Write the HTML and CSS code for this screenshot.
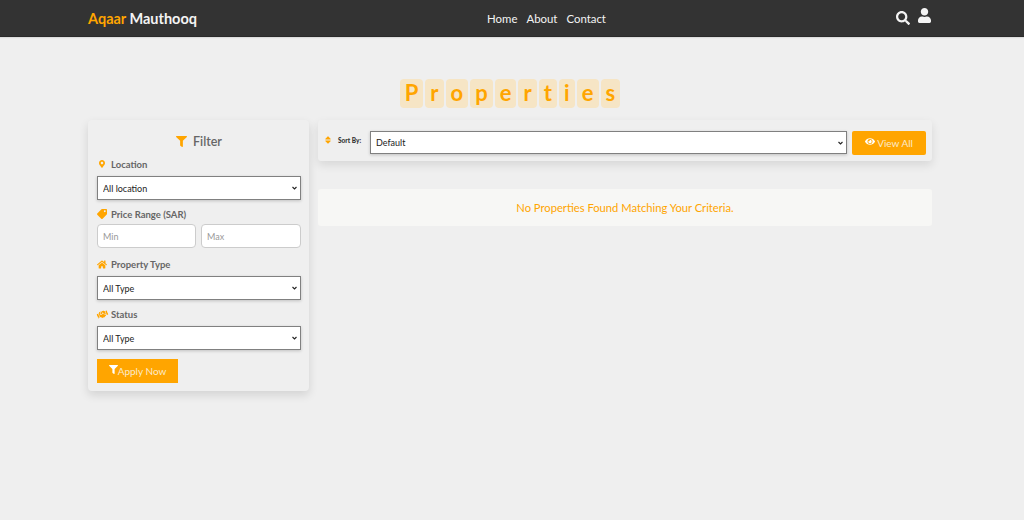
FILE: index.html
```html
<!DOCTYPE html>
<html lang="en">
<head>
<meta charset="utf-8">
<title>Properties</title>
<link rel="stylesheet" href="styles.css">
</head>
<body>
<header class="nav">
  <a class="brand"><span class="accent">Aqaar</span> Mauthooq</a>
  <nav class="links"><a>Home</a><a>About</a><a>Contact</a></nav>
  <div class="nav-icons">
    <svg class="ico-search" viewBox="0 0 512 512"><path d="M505 442.7L405.3 343c-4.5-4.5-10.6-7-17-7H372c27.6-35.3 44-79.7 44-128C416 93.1 322.9 0 208 0S0 93.1 0 208s93.1 208 208 208c48.3 0 92.7-16.4 128-44v16.3c0 6.4 2.5 12.5 7 17l99.7 99.7c9.4 9.4 24.6 9.4 33.9 0l28.3-28.3c9.4-9.4 9.4-24.6.1-34zM208 336c-70.7 0-128-57.2-128-128 0-70.7 57.2-128 128-128 70.7 0 128 57.2 128 128 0 70.7-57.2 128-128 128z"/></svg>
    <svg class="ico-user" viewBox="0 0 448 512"><path d="M224 256c70.7 0 128-57.3 128-128S294.7 0 224 0 96 57.3 96 128s57.3 128 128 128zm89.6 32h-16.7c-22.2 10.2-46.9 16-72.9 16s-50.6-5.8-72.9-16h-16.7C60.2 288 0 348.2 0 422.4V464c0 26.5 21.5 48 48 48h352c26.5 0 48-21.5 48-48v-41.6c0-74.2-60.2-134.4-134.4-134.4z"/></svg>
  </div>
</header>

<h1 class="title"><span>P</span><span>r</span><span>o</span><span>p</span><span>e</span><span>r</span><span>t</span><span>i</span><span>e</span><span>s</span></h1>

<main class="layout">
  <aside class="filter">
    <h2 class="filter-title">
      <svg class="ico-filter-lg" viewBox="0 0 512 512"><path d="M487.976 0H24.028C2.71 0-8.047 25.866 7.058 40.971L192 225.941V432c0 7.831 3.821 15.17 10.237 19.662l80 55.98C298.02 518.69 320 507.493 320 487.98V225.941l184.947-184.97C520.021 25.896 509.338 0 487.976 0z"/></svg>
      Filter
    </h2>
    <label class="field-label"><span class="ico-box"><svg class="ico-s" viewBox="0 0 384 512"><path d="M172.268 501.67C26.97 291.031 0 269.413 0 192 0 85.961 85.961 0 192 0s192 85.961 192 192c0 77.413-26.97 99.031-172.268 309.67-9.535 13.774-29.93 13.773-39.464 0zM192 272c44.183 0 80-35.817 80-80s-35.817-80-80-80-80 35.817-80 80 35.817 80 80 80z"/></svg></span>Location</label>
    <select class="pick"><option>All location</option></select>
    <label class="field-label gap-price"><span class="ico-box"><svg class="ico-tag" viewBox="0 0 512 512"><path d="M0 252.118V48C0 21.49 21.49 0 48 0h204.118a48 48 0 0 1 33.941 14.059l211.882 211.882c18.745 18.745 18.745 49.137 0 67.882L293.823 497.941c-18.745 18.745-49.137 18.745-67.882 0L14.059 286.059A48 48 0 0 1 0 252.118zM112 64c-26.51 0-48 21.49-48 48s21.49 48 48 48 48-21.49 48-48-21.49-48-48-48z"/></svg></span>Price Range (SAR)</label>
    <div class="range">
      <input class="num" placeholder="Min">
      <input class="num" placeholder="Max">
    </div>
    <label class="field-label gap-type"><span class="ico-box"><svg class="ico-home" viewBox="0 0 576 512"><path d="M280.37 148.26L96 300.11V464a16 16 0 0 0 16 16l112.06-.29a16 16 0 0 0 15.92-16V368a16 16 0 0 1 16-16h64a16 16 0 0 1 16 16v95.64a16 16 0 0 0 16 16.05L464 480a16 16 0 0 0 16-16V300L295.67 148.26a12.19 12.19 0 0 0-15.3 0zM571.6 251.47L488 182.56V44.05a12 12 0 0 0-12-12h-56a12 12 0 0 0-12 12v72.61L318.47 43a48 48 0 0 0-61 0L4.34 251.47a12 12 0 0 0-1.6 16.9l25.5 31A12 12 0 0 0 45.15 301l235.22-193.74a12.19 12.19 0 0 1 15.3 0L530.9 301a12 12 0 0 0 16.9-1.6l25.5-31a12 12 0 0 0-1.7-16.93z"/></svg></span>Property Type</label>
    <select class="pick"><option>All Type</option></select>
    <label class="field-label gap-status"><span class="ico-box"><svg class="ico-shake" viewBox="0 0 640 512"><path d="M434.7 64h-85.9c-8 0-15.7 3-21.6 8.4l-98.3 90c-.1.1-.2.3-.3.4-16.6 15.6-16.3 40.5-2.1 56 12.7 13.9 39.4 17.6 56.1 2.7.1-.1.3-.1.4-.2l79.9-73.2c6.5-5.9 16.7-5.5 22.6 1 6 6.5 5.5 16.6-1 22.6l-26.1 23.9L504 313.8c2.9 2.4 5.5 5 7.9 7.7V128l-54.6-54.6c-5.9-6-14.1-9.4-22.6-9.4zM544 128.2v223.9c0 17.7 14.3 32 32 32h64V128.2h-96zm48 223.9c-8.8 0-16-7.2-16-16s7.2-16 16-16 16 7.2 16 16-7.2 16-16 16zM0 384h64c17.7 0 32-14.3 32-32V128.2H0V384zm48-63.9c8.8 0 16 7.2 16 16s-7.2 16-16 16-16-7.2-16-16c0-8.9 7.2-16 16-16zm435.9 18.6L334.6 217.5l-30 27.5c-29.7 27.1-75.2 24.5-101.7-4.4-26.9-29.4-24.8-74.9 4.4-101.7L289.1 64h-83.8c-8.5 0-16.6 3.4-22.6 9.4L128 128v223.9h18.3l90.5 81.9c27.4 22.3 67.7 18.1 90-9.3l.2-.2 17.9 15.5c15.9 13 39.4 10.5 52.3-5.4l31.4-38.6 5.4 4.4c13.7 11.1 33.9 9.1 45-4.7l9.5-11.7c11.2-13.8 9.1-33.9-4.6-45.1z"/></svg></span>Status</label>
    <select class="pick"><option>All Type</option></select>
    <button class="apply"><svg class="ico-apply" viewBox="0 0 512 512"><path d="M487.976 0H24.028C2.71 0-8.047 25.866 7.058 40.971L192 225.941V432c0 7.831 3.821 15.17 10.237 19.662l80 55.98C298.02 518.69 320 507.493 320 487.98V225.941l184.947-184.97C520.021 25.896 509.338 0 487.976 0z"/></svg>Apply Now</button>
  </aside>

  <section class="results">
    <div class="sortbar">
      <svg class="ico-sort" viewBox="0 0 320 512"><path d="M41 288h238c21.4 0 32.1 25.9 17 41L177 448c-9.4 9.4-24.6 9.4-33.9 0L24 329c-15.1-15.1-4.4-41 17-41zm255-105L177 64c-9.4-9.4-24.6-9.4-33.9 0L24 183c-15.1 15.1-4.4 41 17 41h238c21.4 0 32.1-25.9 17-41z"/></svg>
      <span class="sort-label">Sort By:</span>
      <select class="pick sort-pick"><option>Default</option></select>
      <button class="view"><svg class="ico-eye" viewBox="0 0 576 512"><path d="M572.52 241.4C518.29 135.59 410.93 64 288 64S57.68 135.64 3.48 241.41a32.35 32.35 0 0 0 0 29.19C57.71 376.41 165.07 448 288 448s230.32-71.64 284.52-177.41a32.35 32.35 0 0 0 0-29.19zM288 400a144 144 0 1 1 144-144 143.93 143.93 0 0 1-144 144zm0-240a95.31 95.31 0 0 0-25.31 3.79 47.85 47.85 0 0 1-66.9 66.9A95.78 95.78 0 1 0 288 160z"/></svg>View All</button>
    </div>
    <div class="empty">No Properties Found Matching Your Criteria.</div>
  </section>
</main>
</body>
</html>
```
FILE: styles.css
```css
* { box-sizing: border-box; }
html, body { height: 100%; }
body {
  margin: 0;
  background: #efefef;
  color: #333;
  font-family: "Lato", "Noto Sans", "Liberation Sans", sans-serif;
  overflow: hidden;
}
svg { fill: currentColor; display: block; flex: none; }

.nav {
  height: 37px;
  background: #333;
  color: #f4f4f4;
  border-bottom: 1px solid #2a2a2a;
  box-shadow: 0 1px 1px #ddd;
  padding: 0 93px 0 88px;
  display: flex;
  justify-content: space-between;
  align-items: center;
}
.brand { font-size: 14.5px; font-weight: 700; }
.accent { color: #ffa500; }
.links { display: flex; gap: 9px; font-size: 11.4px; }
.nav-icons { display: flex; align-items: center; gap: 8px; }
.ico-search { width: 14px; height: 14px; margin-top: -1px; }
.ico-user { width: 13px; height: 15px; margin-top: -6px; }

.title {
  margin: 42px 0 0;
  padding-right: 4px;
  display: flex;
  justify-content: center;
  gap: 2px;
  height: 29px;
  font-size: 22px;
  font-weight: 700;
  color: #ffa500;
}
.title span {
  background: #f6e5c5;
  border-radius: 4px;
  padding: 0 5px;
  line-height: 28px;
  min-width: 16px;
  text-align: center;
}

.layout {
  margin: 12px 92px 0 88px;
  display: grid;
  grid-template-columns: 221px 1fr;
  gap: 9px;
  align-items: start;
}

.filter {
  height: 271px;
  background: #efefef;
  border-radius: 4px;
  box-shadow: 0 4px 10px rgba(0, 0, 0, .12);
  padding: 12px 8px 0 9px;
  color: #666;
}
.filter-title {
  margin: 0 0 7px;
  display: flex;
  justify-content: center;
  align-items: center;
  gap: 6px;
  font-size: 12.5px;
  font-weight: 600;
  color: #666;
  height: 18px;
}
.ico-filter-lg { width: 11px; height: 11px; color: #ffa500; }
.field-label {
  display: flex;
  align-items: center;
  height: 14px;
  font-size: 9.5px;
  font-weight: 700;
  color: #666;
  margin-bottom: 5px;
}
.ico-box { width: 14px; display: flex; justify-content: flex-start; color: #ffa500; }
.ico-s { width: 6px; height: 8px; margin-left: 2px; }
.ico-tag { width: 10px; height: 10px; transform: scaleX(-1); }
.ico-home { width: 10px; height: 9px; }
.ico-shake { width: 11px; height: 9px; transform: rotate(-20deg); }
.gap-price { margin-top: 7px; margin-bottom: 3px; }
.gap-type { margin-top: 9px; }
.gap-status { margin-top: 7px; margin-bottom: 5px; }

.pick {
  appearance: none;
  width: 100%;
  height: 24px;
  background: #fff url("data:image/svg+xml,%3Csvg xmlns='http://www.w3.org/2000/svg' viewBox='0 0 10 6'%3E%3Cpath d='M1 1l4 4 4-4' fill='none' stroke='%23222' stroke-width='2.2'/%3E%3C/svg%3E") no-repeat right 3px center / 5px 4px;
  border: 1px solid #808080;
  border-radius: 0;
  box-shadow: 0 1px 3px rgba(0, 0, 0, .2);
  font-family: inherit;
  font-size: 9px;
  color: #222;
  padding: 0 5px;
  display: block;
}
.range { display: grid; grid-template-columns: 99px 100px; gap: 5px; }
.num {
  height: 24px;
  width: 100%;
  min-width: 0;
  background: #fff;
  border: 1px solid #ccc;
  border-radius: 4px;
  font-family: inherit;
  font-size: 9px;
  padding: 0 5px;
}
.num::placeholder { color: #999; opacity: 1; }

.apply {
  margin-top: 9px;
  height: 24px;
  width: 81px;
  background: #ffa500;
  color: #fbeacb;
  border: 0;
  border-radius: 0;
  font-family: inherit;
  font-size: 10px;
  padding: 0;
  display: flex;
  align-items: center;
  justify-content: center;
}
.ico-apply { width: 9px; height: 9px; color: #fff; margin-top: -3px; }

.results { display: flex; flex-direction: column; gap: 28px; min-width: 0; }
.sortbar {
  height: 41px;
  background: #efefef;
  border-radius: 3px;
  box-shadow: 0 4px 10px rgba(0, 0, 0, .1);
  padding: 4px 6px 0;
  display: flex;
  align-items: center;
}
.ico-sort { width: 6px; height: 10px; color: #ffa500; margin: -5px 7px 0 1px; }
.sort-label { font-size: 6.5px; font-weight: 900; color: #333; width: 32px; margin-top: -5px; }
.sort-pick { flex: 1; min-width: 0; width: auto; height: 23px; }
.view {
  margin-left: 5px;
  width: 74px;
  height: 24px;
  background: #ffa500;
  color: #fbeacb;
  border: 0;
  border-radius: 2px;
  font-family: inherit;
  font-size: 10px;
  padding: 0;
  display: flex;
  align-items: center;
  justify-content: center;
  gap: 2px;
}
.ico-eye { width: 10px; height: 9px; color: #fff; margin-top: -2px; }
.empty {
  height: 37px;
  background: #f7f7f5;
  border-radius: 3px;
  color: #ffa500;
  font-size: 11.2px;
  display: flex;
  align-items: center;
  justify-content: center;
}
```
